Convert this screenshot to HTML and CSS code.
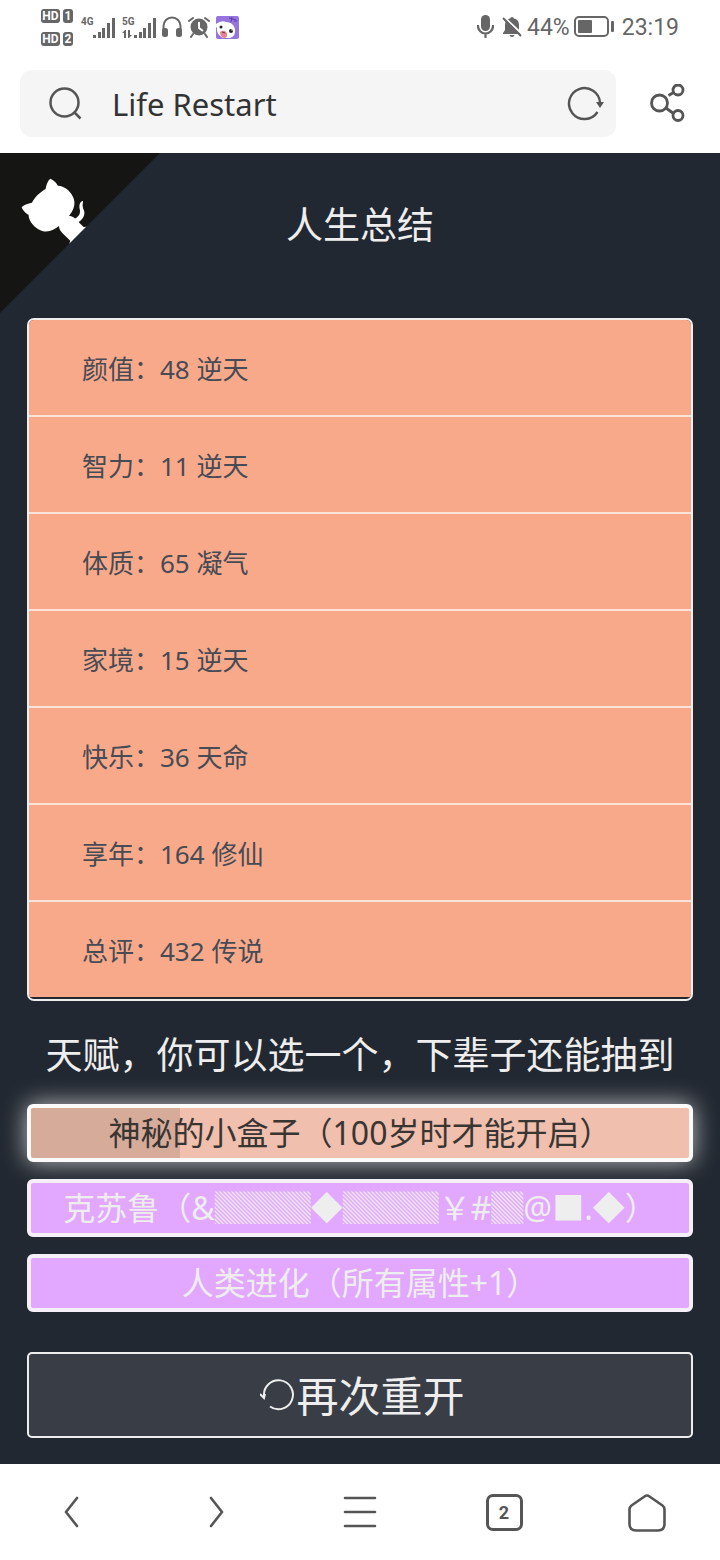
FILE: index.html
```html
<!DOCTYPE html>
<html lang="zh-CN">
<head>
    <meta charset="UTF-8">
    <meta name="viewport" content="width=device-width, initial-scale=1.0">
    <title>Life Restart</title>
    <link rel="stylesheet" href="styles.css">
</head>
<body>
    <div class="status-bar">
        <div class="status-left">
            <div class="sims">
                <span class="hd">HD</span><span class="hd">1</span>
                <span class="hd">HD</span><span class="hd">2</span>
            </div>
            <svg class="signal-4g" width="34" height="24" viewBox="0 0 34 24" fill="#666">
                <text x="0" y="10">4G</text>
                <path d="M12 20h3v3h-3zM17 17h3v6h-3zM21 13h3v10h-3zM26 8h3v15h-3zM31 3h3v20h-3z"/>
            </svg>
            <svg class="signal-5g" width="34" height="24" viewBox="0 0 34 24" fill="#666">
                <text x="0" y="10">5G</text>
                <path d="M12 20h3v3h-3zM17 17h3v6h-3zM21 13h3v10h-3zM26 8h3v15h-3zM31 3h3v20h-3z"/>
                <path d="M0 18l3-3h1v8H2v-5zM6 15h2v5h2l-3 3H6z"/>
            </svg>
            <svg class="headphones" width="20" height="22" viewBox="0 0 20 22" fill="#666">
                <path d="M1.500 15v-5a8.500 8.500 0 0 1 17 0v5" fill="none" stroke="#666" stroke-width="2"/>
                <rect x="0" y="12" width="6" height="9" rx="2.500"/>
                <rect x="14" y="12" width="6" height="9" rx="2.500"/>
            </svg>
            <svg class="alarm" width="22" height="22" viewBox="0 0 22 22" fill="#666">
                <circle cx="11" cy="11" r="8.500"/>
                <path d="M1 5l4-3M21 5l-4-3M5 18l-2 3M17 18l2 3" stroke="#666" stroke-width="2" stroke-linecap="round"/>
                <path d="M11 6v6l4 3" fill="none" stroke="#fff" stroke-width="2"/>
            </svg>
            <svg class="avatar" width="23" height="23" viewBox="0 0 23 23">
                <rect width="23" height="23" rx="2" fill="#9574dd"/>
                <path d="M0 8Q5 4 10 6Q17 6 19 13Q20 20 14 22H7Q0 18 1 12L0 11z" fill="#fff"/>
                <path d="M13 2l7 2M16 1l-1 5M18 5l3 0" stroke="#5c3dad" stroke-width="1"/>
                <circle cx="5" cy="11" r="1.500" fill="#222"/>
                <circle cx="15" cy="15" r="2" fill="#222"/>
                <circle cx="16" cy="14" r=".7" fill="#fff"/>
                <path d="M4 16q4-3 7 1q1 5-3 5q-4-1-4-6z" fill="#e78492"/>
                <path d="M6 16l3 1" stroke="#7b3142"/>
            </svg>
        </div>
        <div class="status-right">
            <svg width="17" height="24" viewBox="0 0 17 24" fill="#666">
                <rect x="4" y="0" width="9" height="16" rx="4.500"/>
                <path d="M1 10v1a7.500 7.500 0 0 0 15 0v-1M8.500 18v5" fill="none" stroke="#666" stroke-width="2.200"/>
            </svg>
            <svg class="bell" width="20" height="22" viewBox="0 0 20 22" fill="#666">
                <path d="M10 1q1.500 0 2 1.500q5 1 5 6.500v5l2 3v1H1v-1l2-3V9q0-5.500 5-6.500q.5-1.500 2-1.500zM7.500 19h5q-.5 2-2.500 2t-2.500-2z"/>
                <path d="M2 1l18 17" stroke="#fff" stroke-width="2"/>
                <path d="M1 2l18 18" stroke="#666" stroke-width="2"/>
            </svg>
            <span>44%</span>
            <svg class="battery" width="40" height="22" viewBox="0 0 40 22" fill="#666">
                <rect x="1" y="1" width="33" height="19" rx="4" fill="none" stroke="#666" stroke-width="2"/>
                <rect x="4" y="4" width="14" height="13" rx="1"/>
                <rect x="37" y="5" width="3" height="11" rx="1"/>
            </svg>
            <span>23:19</span>
        </div>
    </div>

    <div class="browser-bar">
        <div class="address">
            <svg width="34" height="34" viewBox="0 0 34 34" fill="none" stroke="#555" stroke-width="2.500">
                <circle cx="15.500" cy="15.500" r="14"/>
                <path d="M25.500 25.500l6 6"/>
            </svg>
            <input type="text" class="address-input" value="Life Restart" aria-label="Address">
            <button class="icon-btn" aria-label="Reload">
                <svg width="38" height="36" viewBox="0 0 38 36" fill="none" stroke="#555" stroke-width="2.400">
                    <path d="M31.500 26A15.500 15.500 0 1 1 34 17"/>
                    <path d="M30 16h8l-4 6z" fill="#555" stroke="none"/>
                </svg>
            </button>
        </div>
        <button class="icon-btn" aria-label="Share">
            <svg width="36" height="40" viewBox="0 0 36 40" fill="none" stroke="#555" stroke-width="2.800">
                <circle cx="9.500" cy="19" r="8"/>
                <circle cx="28" cy="6" r="5"/>
                <circle cx="28" cy="31.500" r="5"/>
                <path d="M18.500 11.500l5-3M16 24l7.500 5.500"/>
            </svg>
        </button>
    </div>

    <main class="game">
        <a href="#" class="github-corner" aria-label="View source on GitHub">
            <svg width="160" height="160" viewBox="0 0 250 250">
                <g transform="translate(250 0) scale(-1 1)">
                    <path d="M0 0L250 250V0z" fill="#151513"/>
                    <path d="M128.300 109C113.800 99.700 119 89.600 119 89.600C122 82.700 120.500 78.600 120.500 78.600C119.200 72 123.400 76.300 123.400 76.300C127.300 80.900 125.500 87.300 125.500 87.300C122.900 97.600 130.600 101.900 134.400 103.200" fill="#fff"/>
                    <path d="M115 115C114.900 115.100 118.700 116.500 119.800 115.400L133.700 101.600C136.900 99.200 139.900 98.400 142.200 98.600C133.800 88 127.500 74.400 143.800 58C148.500 53.400 154 51.200 159.700 51C160.300 49.400 163.200 43.600 171.400 40.100C171.400 40.100 176.100 42.500 178.800 56.200C183.100 58.600 187.200 61.800 190.900 65.400C194.500 69 197.700 73.200 200.100 77.600C213.800 80.200 216.300 84.900 216.300 84.900C212.700 93.100 206.900 96 205.400 96.600C205.100 102.400 203 107.800 198.300 112.500C181.900 128.900 168.300 122.500 157.700 114.100C157.900 116.900 156.700 120.900 152.700 124.900L141 136.500C139.800 137.700 141.600 141.900 141.800 141.800z" fill="#fff"/>
                </g>
            </svg>
        </a>

        <h1>人生总结</h1>

        <ul class="judge">
            <li>颜值：48 逆天</li>
            <li>智力：11 逆天</li>
            <li>体质：65 凝气</li>
            <li>家境：15 逆天</li>
            <li>快乐：36 天命</li>
            <li>享年：164 修仙</li>
            <li>总评：432 传说</li>
        </ul>

        <h2>天赋，你可以选一个，下辈子还能抽到</h2>

        <div class="talents">
            <button class="talent selected">神秘的小盒子（100岁时才能开启）</button>
            <button class="talent">克苏鲁（&amp;▓▓▓◆▓▓▓￥#▓@■.◆）</button>
            <button class="talent">人类进化（所有属性+1）</button>
        </div>

        <button class="restart">
            <svg width="36" height="34" viewBox="0 0 36 34" fill="none" stroke="#eee" stroke-width="2">
                <path d="M4 19A14.500 14.500 0 1 1 10 29.500"/>
                <path d="M0 17l4 4 1-4"/>
            </svg>
            再次重开
        </button>
    </main>

    <nav class="bottom-nav">
        <button class="icon-btn" aria-label="Back">
            <svg width="40" height="40" viewBox="0 0 40 40"><path d="M25 6L14 20l11 14"/></svg>
        </button>
        <button class="icon-btn" aria-label="Forward">
            <svg width="40" height="40" viewBox="0 0 40 40"><path d="M15 6l11 14-11 14"/></svg>
        </button>
        <button class="icon-btn" aria-label="Menu">
            <svg width="40" height="40" viewBox="0 0 40 40"><path d="M5 6h30M5 20h30M5 34h30"/></svg>
        </button>
        <button class="icon-btn" aria-label="Tabs">
            <span class="tab-count">2</span>
        </button>
        <button class="icon-btn" aria-label="Home">
            <svg width="40" height="40" viewBox="0 0 40 40"><path d="M16.500 4.500Q19 2.500 21.500 4.500L34.500 13.500Q36.500 15 36.500 17.500V32Q36.500 38.500 30 38.500H8Q1.500 38.500 1.500 32V17.500Q1.500 15 3.500 13.500z"/></svg>
        </button>
    </nav>
</body>
</html>
```
FILE: styles.css
```css
* {
    box-sizing: border-box;
}
body {
    margin: 0;
    min-height: 100vh;
    display: flex;
    flex-direction: column;
    font-family: "Noto Sans", "Noto Sans CJK SC", sans-serif;
    background-color: #fff;
    color: #333;
}
button {
    font-family: inherit;
    cursor: pointer;
}
svg {
    display: block;
    flex-shrink: 0;
}
.icon-btn {
    padding: 0;
    border: none;
    background: none;
}

/* phone status bar */
.status-bar {
    height: 54px;
    padding: 0 41px;
    display: flex;
    justify-content: space-between;
    align-items: center;
    font-family: Roboto, sans-serif;
    color: #666;
}
.status-left {
    display: flex;
    align-items: center;
}
.status-left text {
    font-weight: bold;
    font-size: 10px;
}
.sims {
    display: grid;
    grid-template-columns: 19px 10px;
    gap: 9px 3px;
    margin-right: 8px;
}
.hd {
    height: 14px;
    border-radius: 3px;
    background-color: #666;
    color: #fff;
    font-size: 12px;
    font-weight: bold;
    line-height: 14px;
    text-align: center;
}
.signal-5g {
    margin-left: 7px;
}
.headphones,
.alarm,
.avatar {
    margin-left: 6px;
}
.status-right {
    display: flex;
    align-items: center;
    font-size: 23px;
}
.bell {
    margin: 0 5px 0 8px;
}
.battery {
    margin: 0 8px 0 4px;
}

/* address bar */
.browser-bar {
    display: flex;
    align-items: center;
    gap: 34px;
    padding: 16px 34px 16px 20px;
}
.address {
    flex: 1;
    min-width: 0;
    height: 67px;
    display: flex;
    align-items: center;
    gap: 29px;
    padding: 0 12px 0 29px;
    border-radius: 12px;
    background-color: #f5f5f5;
}
.address-input {
    flex: 1;
    min-width: 0;
    padding: 0;
    border: none;
    outline: none;
    background: none;
    font-family: inherit;
    font-size: 31px;
    color: #333;
}

/* game page */
.game {
    flex: 1;
    position: relative;
    display: flex;
    flex-direction: column;
    padding: 44px 27px 26px;
    background-color: #222831;
    color: #eee;
}
.github-corner {
    position: absolute;
    top: 0;
    left: 0;
}
h1,
h2 {
    margin: 0;
    font-size: 37px;
    font-weight: normal;
    line-height: 56px;
    text-align: center;
}
.judge {
    margin: 65px 0 26px;
    padding: 0;
    list-style: none;
    border: 2px solid #eee;
    border-radius: 7px;
    overflow: hidden;
}
.judge li {
    height: 97px;
    padding-left: 53px;
    border-bottom: 2px solid #fce3da;
    background-color: #f8a98a;
    color: #464b55;
    font-size: 26px;
    line-height: 98px;
}
.judge li:last-child {
    border-bottom-color: #222831;
}
.talents {
    display: flex;
    flex-direction: column;
    gap: 17px;
    margin: 21px 0 40px;
}
.talent {
    height: 58px;
    padding: 0;
    border: 4px solid #f5f0f8;
    border-radius: 6px;
    background-color: #e2a7ff;
    color: #eee;
    font-size: 32px;
    line-height: 48px;
    white-space: nowrap;
}
.talent.selected {
    border-color: #fafafa;
    background: linear-gradient(to right, #d7ab99 149px, #f0bfad 149px);
    color: #393532;
    box-shadow: 0 0 24px rgba(255, 255, 255, 0.7);
}
.restart {
    height: 86px;
    display: flex;
    justify-content: center;
    align-items: center;
    padding: 0 0 3px 5px;
    border: 2px solid #eee;
    border-radius: 5px;
    background-color: #393e46;
    color: #eee;
    font-size: 42px;
}

/* browser toolbar */
.bottom-nav {
    height: 96px;
    display: grid;
    grid-template-columns: repeat(5, 1fr);
    background-color: #fff;
}
.bottom-nav .icon-btn {
    display: flex;
    justify-content: center;
    align-items: center;
}
.bottom-nav path {
    fill: none;
    stroke: #555;
    stroke-width: 2.6px;
    stroke-linecap: round;
    stroke-linejoin: round;
}
.tab-count {
    width: 37px;
    height: 37px;
    border: 3px solid #555;
    border-radius: 7px;
    color: #555;
    font-family: Roboto, sans-serif;
    font-size: 18px;
    font-weight: bold;
    line-height: 31px;
    text-align: center;
}
```
